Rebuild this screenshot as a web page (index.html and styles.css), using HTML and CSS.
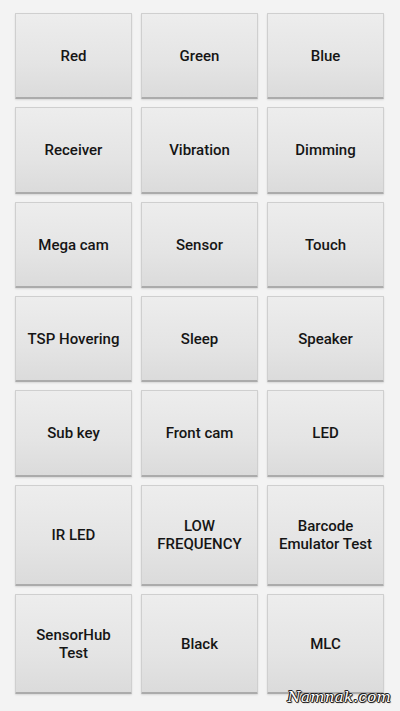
FILE: index.html
```html
<!DOCTYPE html>
<html>
<head>
<meta charset="utf-8">
<link rel="stylesheet" href="styles.css">
</head>
<body>
<div class="screen">
  <div class="grid">
    <div class="btn">Red</div>
    <div class="btn">Green</div>
    <div class="btn">Blue</div>
    <div class="btn">Receiver</div>
    <div class="btn">Vibration</div>
    <div class="btn">Dimming</div>
    <div class="btn">Mega cam</div>
    <div class="btn">Sensor</div>
    <div class="btn">Touch</div>
    <div class="btn">TSP Hovering</div>
    <div class="btn">Sleep</div>
    <div class="btn">Speaker</div>
    <div class="btn">Sub key</div>
    <div class="btn">Front cam</div>
    <div class="btn">LED</div>
    <div class="btn">IR LED</div>
    <div class="btn">LOW<br>FREQUENCY</div>
    <div class="btn">Barcode<br>Emulator Test</div>
    <div class="btn">SensorHub<br>Test</div>
    <div class="btn">Black</div>
    <div class="btn">MLC</div>
  </div>
  <div class="watermark">Namnak.com</div>
</div>
</body>
</html>
```
FILE: styles.css
```css
html, body {
  margin: 0;
  padding: 0;
  background: #f3f3f3;
}
.screen {
  position: relative;
  width: 400px;
  height: 711px;
  overflow: hidden;
  background: #f3f3f3;
}
.grid {
  display: grid;
  grid-template-columns: repeat(3, 117px);
  grid-template-rows: 86px 87px 86px 86px 87px 101px 100px;
  column-gap: 9px;
  row-gap: 8px;
  padding: 13px 0 0 15px;
}
.btn {
  display: flex;
  align-items: center;
  justify-content: center;
  text-align: center;
  box-sizing: border-box;
  background: linear-gradient(to bottom, #ededed 0%, #e4e4e4 60%, #dbdbdb 100%);
  border: 1px solid #cfcfcf;
  border-bottom: 2px solid #ababab;
  border-radius: 1px;
  box-shadow: 0 1px 2px rgba(0, 0, 0, 0.12);
  font-family: Roboto, "Liberation Sans", sans-serif;
  font-size: 15px;
  font-weight: 500;
  line-height: 18px;
  color: #151515;
}
.watermark {
  position: absolute;
  right: 9px;
  bottom: 5px;
  font-family: "DejaVu Serif", serif;
  font-style: italic;
  font-size: 15px;
  color: #ffffff;
  letter-spacing: 0.3px;
  text-shadow: 1px 0 0 #222, -1px 0 0 #222, 0 1px 0 #222, 0 -1px 0 #222, 1px 1px 1px #222, -1px -1px 0 #222;
}
```
